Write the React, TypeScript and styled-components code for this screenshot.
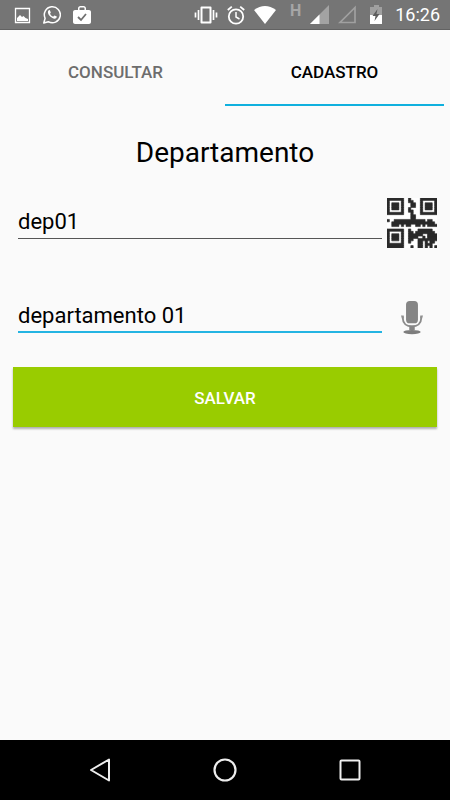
import React, { useState } from "react";
import styled, { createGlobalStyle } from "styled-components";

const GlobalStyle = createGlobalStyle`
  *, *::before, *::after { box-sizing: border-box; }
  body {
    margin: 0;
    background: #fafafa;
    color: #000;
    font-family: Roboto, "Liberation Sans", sans-serif;
  }
`;

const Screen = styled.div`
  display: flex;
  flex-direction: column;
  min-height: 100vh;
`;

const StatusBar = styled.header`
  display: flex;
  align-items: center;
  justify-content: space-between;
  height: 30px;
  padding: 0 10px 0 12px;
  background: #757575;
  border-bottom: 1px solid #626262;
  color: #fff;
`;

const IconGroup = styled.div<{ $gap: number }>`
  display: flex;
  align-items: center;
  gap: ${(p) => p.$gap}px;

  svg { display: block; }
`;

const NetworkType = styled.span`
  align-self: flex-start;
  width: 16px;
  color: #a6a6a6;
  font-size: 16px;
  font-weight: 700;
  line-height: 12px;
  text-align: right;
`;

const Clock = styled.time`
  font-size: 18px;
  font-weight: 400;
  line-height: 24px;
`;

const Tabs = styled.div`
  display: grid;
  grid-template-columns: 1fr 1fr;
  padding: 0 6px;
`;

const Tab = styled.button<{ $active: boolean }>`
  height: 76px;
  padding: 10px 0 0;
  border: 0;
  border-bottom: 2px solid ${(p) => (p.$active ? "#0fb0de" : "transparent")};
  background: none;
  color: ${(p) => (p.$active ? "#000" : "#6d6d6d")};
  font: 500 17px/20px Roboto, "Liberation Sans", sans-serif;
  text-transform: uppercase;
`;

const Form = styled.form`
  flex: 1;
  display: flex;
  flex-direction: column;
  padding: 29px 13px;
`;

const Title = styled.h1`
  margin: 0 0 27px;
  font-size: 28px;
  font-weight: 400;
  line-height: 36px;
  text-align: center;
`;

const FieldRow = styled.div`
  display: flex;
  align-items: center;
  gap: 5px;
  height: 50px;
  padding-left: 5px;
`;

const FieldList = styled.div`
  display: flex;
  flex-direction: column;
  gap: 44px;
  padding-bottom: 25px;
`;

const Field = styled.input<{ $focused: boolean }>`
  flex: 1;
  min-width: 0;
  height: 32px;
  padding: 0 0 ${(p) => (p.$focused ? 1 : 2)}px;
  border: 0;
  border-bottom: ${(p) => (p.$focused ? "2px solid #24b4e2" : "1px solid #555")};
  border-radius: 0;
  outline: 0;
  background: transparent;
  color: #000;
  font: 400 22px/28px Roboto, "Liberation Sans", sans-serif;
`;

const IconButton = styled.button`
  display: grid;
  place-items: center;
  width: 50px;
  height: 50px;
  padding: 0;
  border: 0;
  background: none;
`;

const SaveButton = styled.button`
  height: 60px;
  padding: 2px 0 0;
  border: 0;
  background: #99cc00;
  box-shadow: 0 2px 2px rgba(0, 0, 0, 0.3);
  color: #fff;
  font: 500 17px/20px Roboto, "Liberation Sans", sans-serif;
  text-transform: uppercase;
`;

const NavBar = styled.nav`
  display: flex;
  justify-content: center;
  align-items: center;
  gap: 75px;
  height: 60px;
  background: #000;
`;

const NavButton = styled.button`
  display: grid;
  place-items: center;
  width: 50px;
  height: 50px;
  padding: 0;
  border: 0;
  background: none;
`;

const QR_ROWS = [
  "#######..#....#######",
  "#.....#..##...#.....#",
  "#.###.#...##..#.###.#",
  "#.###.#...##..#.###.#",
  "#.###.#..#....#.###.#",
  "#.....#..##...#.....#",
  "#######...#...#######",
  "..........##.........",
  "..........##.........",
  "#..#############.##..",
  "..##################.",
  "..###.#.##..##.#.####",
  ".....................",
  "#######..#...######..",
  "#.....#..##.########.",
  "#.###.#..######..####",
  "#.###.#..####..#.####",
  "#.###.#..##..########",
  "#.....#..#...##.#.##.",
  "#######......##.###..",
  "#######...#..##.#.#.#",
];

function QrIcon() {
  const path = QR_ROWS.flatMap((row, y) =>
    [...row.matchAll(/#+/g)].map((run) => `M${run.index} ${y}h${run[0].length}v1h-${run[0].length}z`)
  ).join("");
  return (
    <svg width="50" height="50" viewBox="0 0 21 21" aria-hidden="true">
      <rect width="21" height="21" fill="#fff" />
      <path d={path} fill="#2b2b2b" stroke="#2b2b2b" strokeWidth="0.25" />
    </svg>
  );
}

function MicIcon() {
  return (
    <svg width="22" height="35" viewBox="0 0 24 36" preserveAspectRatio="none" aria-hidden="true">
      <rect x="5.500" y="1" width="13" height="23" rx="4" fill="#858585" />
      <path d="M2 17v2c0 5 4 8 10 8s10-3 10-8v-2" fill="none" stroke="#8b8b8b" strokeWidth="2" />
      <path d="M0 16h3v3H1zM21 16h3l-1 3h-2z" fill="#909090" />
      <path d="M9 27h6v4H9z" fill="#858585" />
      <ellipse cx="12" cy="33" rx="9.500" ry="2.200" fill="#7d7d7d" />
    </svg>
  );
}

function NotificationIcons() {
  return (
    <IconGroup $gap={11}>
      <svg width="20" height="20" viewBox="0 0 20 20" aria-label="Imagem">
        <path d="M3.500 3.500h14v14h-14z" fill="none" stroke="#fff" strokeWidth="1.300" />
        <path d="M5 16v-3l3-3 2 2 1.500-1 2 2 2.500 1v2z" fill="#fff" />
      </svg>
      <svg width="18" height="19" viewBox="0 0 18 19" aria-label="WhatsApp">
        <path d="M.8 18 2.100 13.200A8 8 0 1 1 5.300 16.700z" fill="none" stroke="#fff" strokeWidth="1.500" strokeLinejoin="round" />
        <path d="M6.400 5.100c-.5 0-1.500.8-1.500 2.200 0 2.800 4 6.400 6.700 6.400 1.300 0 2.300-.9 2.200-2.100l-2.300-1.200c-.5 0-.8 1.300-1.400 1.200-1.200-.4-2.700-1.800-3.100-2.900 0-.4.900-.9.800-1.300l-.9-2.200z" fill="#fff" />
      </svg>
      <svg width="20" height="20" viewBox="0 0 20 20" aria-label="Tarefas">
        <path d="M3 5h3V3.500C6 2 7 1 8.500 1h3C13 1 14 2 14 3.500V5h3c1 0 2 .8 2 2v10c0 1-1 2-2 2H3c-1 0-2-1-2-2V7c0-1.200 1-2 2-2zm4.500 0h5V3.500c0-.6-.4-1-1-1h-3c-.6 0-1 .4-1 1z" fill="#fff" fillRule="evenodd" />
        <path d="m6 12 3 3 5-6" fill="none" stroke="#707070" strokeWidth="1.800" />
      </svg>
    </IconGroup>
  );
}

function SystemIcons() {
  return (
    <IconGroup $gap={9}>
      <svg width="24" height="20" viewBox="0 0 24 20" aria-label="Vibrar">
        <path d="M7.500 2.500h9v15h-9z" fill="none" stroke="#fff" strokeWidth="2" strokeLinejoin="round" />
        <path d="M4.500 5v10M1.500 7.500v5M19.500 5v10M22.500 7.500v5" stroke="#fff" strokeWidth="1.700" />
      </svg>
      <svg width="18" height="20" viewBox="0 0 18 20" aria-label="Alarme">
        <circle cx="9" cy="11.500" r="7.200" fill="none" stroke="#fff" strokeWidth="1.800" />
        <path d="m.8 5 4-3.400M17.200 5l-4-3.400" stroke="#fff" strokeWidth="1.800" />
        <path d="M9 7v5l3.500 2" fill="none" stroke="#fff" strokeWidth="1.500" />
      </svg>
      <svg width="22" height="18" viewBox="0 0 22 18" aria-label="Wi-Fi">
        <path d="M0 4Q11-4 22 4L11 18z" fill="#fff" />
      </svg>
      <IconGroup $gap={9}>
        <NetworkType>H</NetworkType>
        <svg width="19" height="19" viewBox="0 0 19 19" aria-label="Sinal 1">
          <path d="M19 0v19H0z" fill="#a3a3a3" />
          <path d="M9.500 9.500V19H0z" fill="#fff" />
        </svg>
        <svg width="19" height="19" viewBox="0 0 19 19" aria-label="Sinal 2">
          <path d="M17 2.500v15H2z" fill="none" stroke="#a0a0a0" strokeWidth="1.700" />
        </svg>
        <svg width="20" height="19" viewBox="0 0 20 19" aria-label="Bateria">
          <path d="M8 0h5v2h3v9H4V2h4z" fill="#a0a0a0" />
          <path d="M4 10h12v9H4z" fill="#fff" />
          <path d="M11.500 4 6.500 11h3l-1 5 5-7h-3z" fill="#5d5d5d" />
        </svg>
      </IconGroup>
      <Clock>16:26</Clock>
    </IconGroup>
  );
}

const TABS = ["Consultar", "Cadastro"];

export default function App() {
  const [tab, setTab] = useState("Cadastro");
  const [code, setCode] = useState("dep01");
  const [name, setName] = useState("departamento 01");
  const [focused, setFocused] = useState("name");

  return (
    <Screen>
      <GlobalStyle />
      <StatusBar>
        <NotificationIcons />
        <SystemIcons />
      </StatusBar>
      <Tabs role="tablist">
        {TABS.map((label) => (
          <Tab
            key={label}
            type="button"
            role="tab"
            aria-selected={tab === label}
            $active={tab === label}
            onClick={() => setTab(label)}
          >
            {label}
          </Tab>
        ))}
      </Tabs>
      <Form onSubmit={(e) => e.preventDefault()}>
        <Title>Departamento</Title>
        <FieldList>
          <FieldRow>
            <Field
              aria-label="Código"
              value={code}
              $focused={focused === "code"}
              onFocus={() => setFocused("code")}
              onChange={(e) => setCode(e.target.value)}
            />
            <IconButton type="button" aria-label="Ler código QR">
              <QrIcon />
            </IconButton>
          </FieldRow>
          <FieldRow>
            <Field
              aria-label="Nome"
              value={name}
              $focused={focused === "name"}
              onFocus={() => setFocused("name")}
              onChange={(e) => setName(e.target.value)}
            />
            <IconButton type="button" aria-label="Ditar nome">
              <MicIcon />
            </IconButton>
          </FieldRow>
        </FieldList>
        <SaveButton type="submit">Salvar</SaveButton>
      </Form>
      <NavBar>
        <NavButton type="button" aria-label="Voltar">
          <svg width="24" height="26" viewBox="0 0 24 26">
            <path d="M21 2.500v21L3 13z" fill="none" stroke="#eee" strokeWidth="2" strokeLinejoin="round" />
          </svg>
        </NavButton>
        <NavButton type="button" aria-label="Início">
          <svg width="24" height="24" viewBox="0 0 24 24">
            <circle cx="12" cy="12" r="10.500" fill="none" stroke="#eee" strokeWidth="2.200" />
          </svg>
        </NavButton>
        <NavButton type="button" aria-label="Recentes">
          <svg width="22" height="22" viewBox="0 0 22 22">
            <rect x="1.500" y="1.500" width="19" height="19" rx="1" fill="none" stroke="#eee" strokeWidth="2" />
          </svg>
        </NavButton>
      </NavBar>
    </Screen>
  );
}
